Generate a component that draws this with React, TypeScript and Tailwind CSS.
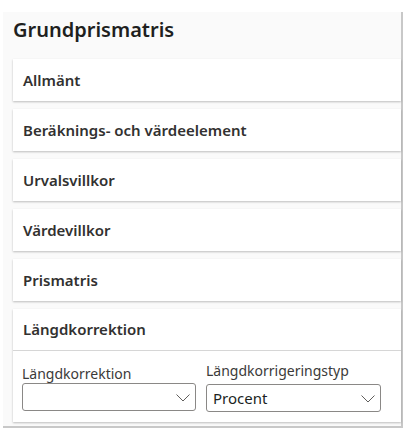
const sections = [
  "Allmänt",
  "Beräknings- och värdeelement",
  "Urvalsvillkor",
  "Värdevillkor",
  "Prismatris",
];

function Card({ title }: { title: string }) {
  return (
    <div className="h-[42px] bg-white shadow-[0_1px_2px_rgba(0,0,0,0.25)] flex items-center pl-[10px]">
      <span className="text-[15px] font-semibold text-[#323130]">{title}</span>
    </div>
  );
}

function Select({ value }: { value?: string }) {
  return (
    <div className="h-[28px] border border-[#8a8886] rounded-[3px] bg-white flex items-center justify-between pl-[6px] pr-[5px]">
      <span className="text-[15px] text-[#201f1e]">{value ?? ""}</span>
      <svg width="14" height="8" viewBox="0 0 14 8" className="mt-[2px]">
        <polyline points="0.5,0.5 7,7 13.5,0.5" fill="none" stroke="#605e5c" strokeWidth="1" />
      </svg>
    </div>
  );
}

export default function App() {
  return (
    <div className="w-[405px] h-[433px] bg-white pt-[12px] pl-[3px] font-['Noto_Sans',sans-serif]">
      <div className="w-[400px] h-[416px] bg-[#fafafa] border-r-2 border-b-2 border-[#c8c8c8] pl-[10px]">
        <h1 className="text-[20px] font-semibold text-[#201f1e] pt-[4px] pb-[15px] leading-[28px]">
          Grundprismatris
        </h1>
        <div className="flex flex-col gap-[8px]">
          {sections.map((s) => (
            <Card key={s} title={s} />
          ))}
          <div className="bg-white shadow-[0_1px_2px_rgba(0,0,0,0.25)]">
            <div className="h-[42px] flex items-center pl-[10px] border-b border-[#d6d6d6]">
              <span className="text-[15px] font-semibold text-[#323130]">Längdkorrektion</span>
            </div>
            <div className="flex gap-[10px] px-[9px] pt-[10px] pb-[10px]">
              <div className="w-[174px] flex flex-col">
                <label className="text-[14px] text-[#3b3a39] leading-[18px] mt-[4px]">Längdkorrektion</label>
                <Select />
              </div>
              <div className="w-[175px] flex flex-col">
                <label className="text-[14px] text-[#3b3a39] leading-[20px]">Längdkorrigeringstyp</label>
                <div className="mt-[3px]">
                  <Select value="Procent" />
                </div>
              </div>
            </div>
          </div>
        </div>
      </div>
    </div>
  );
}
